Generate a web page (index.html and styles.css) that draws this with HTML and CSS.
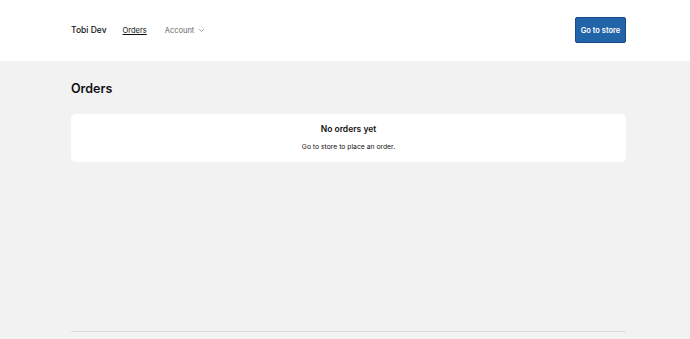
FILE: index.html
```html
<!DOCTYPE html>
<html>
	<head>
		<meta charset="utf-8">
		<title>Orders</title>
		<link rel="stylesheet" href="styles.css">
	</head>
	<body>
		<header class="top">
			<div class="wrap top-in">
				<nav class="nav">
					<span class="brand">Tobi Dev</span>
					<a href="#" class="nav-link active">Orders</a>
					<span class="nav-link acct">Account
						<svg width="7" height="5" viewBox="0 0 7 5"><path d="M1.2 1.2l2.3 2.3L5.8 1.2" fill="none" stroke="#888" stroke-width="0.8"/></svg>
					</span>
				</nav>
				<a href="#" class="btn">Go to store</a>
			</div>
		</header>
		<main class="main">
			<div class="wrap">
				<h1 class="title">Orders</h1>
				<div class="card">
					<h2>No orders yet</h2>
					<p>Go to store to place an order.</p>
				</div>
			</div>
		</main>
		<footer class="wrap foot"></footer>
	</body>
</html>
```
FILE: styles.css
```css
* {
	box-sizing: border-box;
}

body {
	margin: 0;
	background: #f2f2f2;
	font-family: Inter, "Liberation Sans", sans-serif;
	color: #111;
}

.wrap {
	margin: 0 64px 0 71px;
}

.top {
	background: #fff;
	height: 61px;
}

.top-in {
	display: flex;
	align-items: center;
	justify-content: space-between;
	height: 100%;
	padding-bottom: 1px;
}

.nav {
	display: flex;
	align-items: center;
	gap: 18px;
}

.brand {
	font-size: 8.5px;
	font-weight: 500;
	margin-right: -2px;
}

.nav-link {
	font-size: 7.5px;
	color: #666;
	text-decoration: none;
}

.active {
	color: #111;
	text-decoration: underline;
}

.acct {
	display: flex;
	align-items: center;
	gap: 4px;
}

.btn {
	display: flex;
	align-items: center;
	justify-content: center;
	width: 51px;
	height: 26px;
	background: #2164a8;
	border: 1px solid #174c85;
	border-radius: 2px;
	color: #fff;
	font-size: 7.5px;
	font-weight: 600;
	text-decoration: none;
}

.main {
	height: 270px;
}

.title {
	margin: 0;
	padding: 20px 0 18px;
	font-size: 12.5px;
	font-weight: 600;
}

.card {
	background: #fff;
	border-radius: 5px;
	height: 48px;
	padding-top: 10px;
	text-align: center;
}

.card h2 {
	margin: 0 0 8px;
	font-size: 8.5px;
	font-weight: 600;
}

.card p {
	margin: 0;
	font-size: 6.8px;
}

.foot {
	border-top: 1px solid #ddd;
}
```
